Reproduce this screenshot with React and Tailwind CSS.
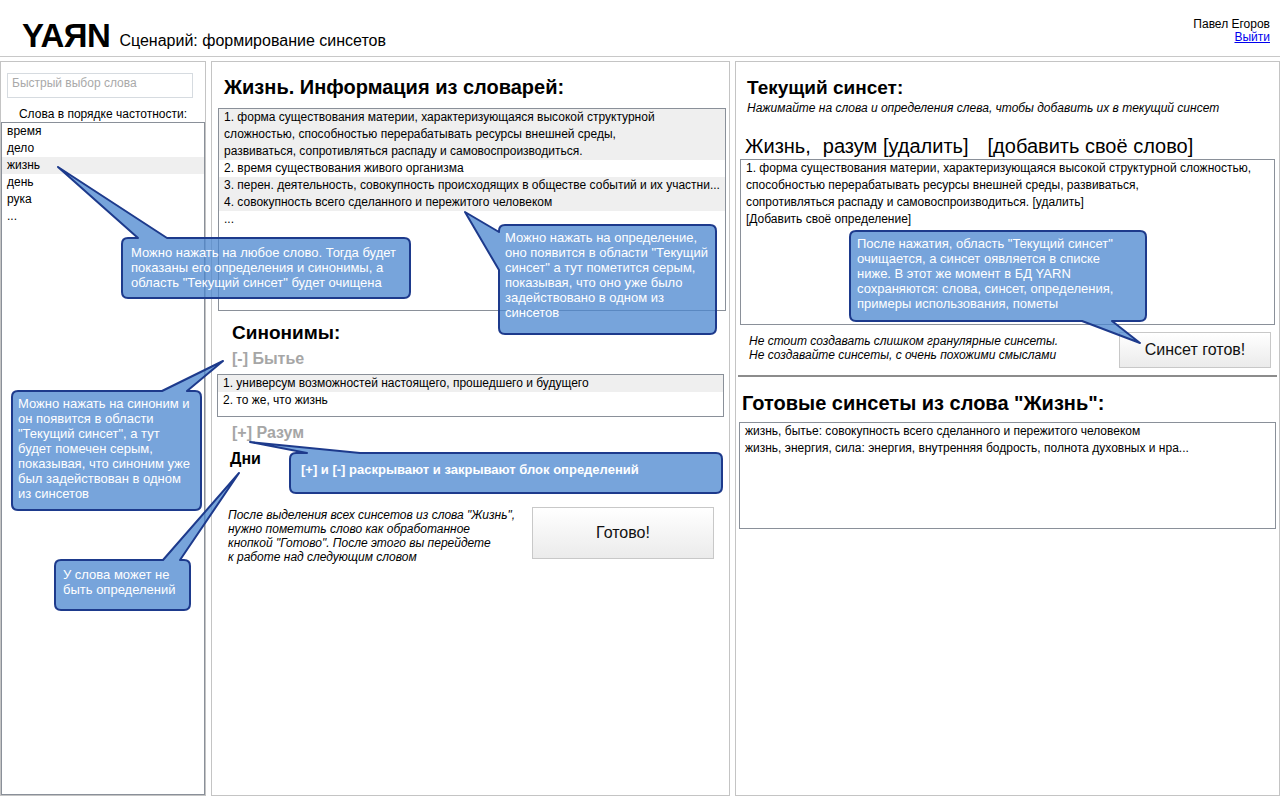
import React from 'react';

const words = ['время', 'дело', 'жизнь', 'день', 'рука', '...'];

const callouts = [
  {
    box: { x: 122, y: 238, w: 288, h: 60 }, side: 'top', a: 138, b: 167, tip: [58, 167],
    text: { x: 131, y: 245 },
    lines: ['Можно нажать на любое слово. Тогда будет', 'показаны его определения и синонимы, а', 'область "Текущий синсет" будет очищена'],
  },
  {
    box: { x: 499, y: 225, w: 217, h: 109 }, side: 'left', a: 232, b: 270, tip: [465, 212],
    text: { x: 505, y: 230 },
    lines: ['Можно нажать на определение,', 'оно появится в области "Текущий', 'синсет" а тут пометится серым,', 'показывая, что оно уже было', 'задействовано в одном из', 'синсетов'],
  },
  {
    box: { x: 12, y: 391, w: 189, h: 119 }, side: 'top', a: 162, b: 187, tip: [223, 361],
    text: { x: 18, y: 396 },
    lines: ['Можно нажать на синоним и', 'он появится в области', '"Текущий синсет", а тут', 'будет помечен серым,', 'показывая, что синоним уже', 'был задействован в одном', 'из синсетов'],
  },
  {
    box: { x: 55, y: 560, w: 135, h: 50 }, side: 'top', a: 163, b: 180, tip: [239, 473],
    text: { x: 63, y: 567 },
    lines: ['У слова может не', 'быть определений'],
  },
  {
    box: { x: 290, y: 453, w: 432, h: 40 }, side: 'top', a: 307, b: 360, tip: [250, 442],
    text: { x: 301, y: 462 }, bold: true,
    lines: ['[+] и [-] раскрывают и закрывают блок определений'],
  },
  {
    box: { x: 850, y: 231, w: 296, h: 90 }, side: 'bottom', a: 1082, b: 1112, tip: [1140, 343],
    text: { x: 857, y: 236 },
    lines: ['После нажатия, область "Текущий синсет"', 'очищается, а синсет оявляется в списке', 'ниже. В этот же момент в БД YARN', 'сохраняются: слова, синсет, определения,', 'примеры использования, пометы'],
  },
];

// rounded box with a pointer on one edge
function calloutPath({ box, side, a, b, tip }) {
  const { x, y, w, h } = box;
  const r = 6;
  const [tx, ty] = tip;
  const R = x + w;
  const B = y + h;
  let d = `M ${x + r} ${y} `;
  if (side === 'top') d += `L ${a} ${y} L ${tx} ${ty} L ${b} ${y} `;
  d += `L ${R - r} ${y} Q ${R} ${y} ${R} ${y + r} L ${R} ${B - r} Q ${R} ${B} ${R - r} ${B} `;
  if (side === 'bottom') d += `L ${b} ${B} L ${tx} ${ty} L ${a} ${B} `;
  d += `L ${x + r} ${B} Q ${x} ${B} ${x} ${B - r} `;
  if (side === 'left') d += `L ${x} ${b} L ${tx} ${ty} L ${x} ${a} `;
  d += `L ${x} ${y + r} Q ${x} ${y} ${x + r} ${y} Z`;
  return d;
}

const Row = ({ gray, children }) => (
  <div className={`px-[5px] leading-[17px] whitespace-nowrap overflow-hidden ${gray ? 'bg-[#efefef]' : ''}`}>{children}</div>
);

const Button = ({ className, children }) => (
  <button className={`border border-[#c8c8c8] bg-linear-to-b from-white to-[#ebebeb] text-[16px] text-[#111] ${className}`}>
    {children}
  </button>
);

export default function App() {
  return (
    <div className="relative w-[1280px] h-[800px] overflow-hidden bg-white text-black font-['Liberation_Sans',Arial,sans-serif]">
      {/* header */}
      <div className="h-[57px] border-b border-[#c8c8c8] flex justify-between">
        <div className="flex items-baseline pl-[22px] pt-[21px]">
          <span className="text-[33px] font-bold tracking-[-0.5px] leading-[30px]">YAЯN</span>
          <span className="ml-[9px] text-[16px] relative -top-[1px]">Сценарий: формирование синсетов</span>
        </div>
        <div className="pt-[18px] pr-[10px] text-right text-[12px] leading-[13px]">
          <div>Павел Егоров</div>
          <a href="#" className="text-[#0000ee] underline">Выйти</a>
        </div>
      </div>

      {/* columns */}
      <div className="mt-[4px] h-[735px] flex gap-[5px]">
        {/* words */}
        <div className="w-[206px] border border-[#c4c4c4] flex flex-col">
          <input
            className="ml-[6px] mt-[11px] w-[186px] h-[25px] border border-[#d6dbe0] px-[4px] pt-0 pb-[6px] text-[12px] outline-none placeholder:text-[#a9a9a9]"
            placeholder="Быстрый выбор слова"
          />
          <div className="mt-[8px] text-center text-[12px] leading-[16px]">Слова в порядке частотности:</div>
          <div className="flex-1 border border-[#8a9099] text-[12px]">
            {words.map((w) => (
              <div key={w} className={`pl-[5px] leading-[17px] ${w === 'жизнь' ? 'bg-[#efefef]' : ''}`}>{w}</div>
            ))}
          </div>
        </div>

        {/* dictionary info */}
        <div className="w-[519px] border border-[#c4c4c4] flex flex-col items-start">
          <h1 className="ml-[12px] mt-[13px] text-[20px] leading-[24px] font-bold">Жизнь. Информация из словарей:</h1>
          <div className="ml-[6px] mt-[9px] w-[508px] h-[203px] border border-[#8a9099] text-[12px]">
            <Row gray>
              1. форма существования материи, характеризующаяся высокой структурной<br />
              сложностью, способностью перерабатывать ресурсы внешней среды,<br />
              развиваться, сопротивляться распаду и самовоспроизводиться.
            </Row>
            <Row>2. время существования живого организма</Row>
            <Row gray>3. перен. деятельность, совокупность происходящих в обществе событий и их участни...</Row>
            <Row gray>4. совокупность всего сделанного и пережитого человеком</Row>
            <Row>...</Row>
          </div>

          <h2 className="ml-[20px] mt-[10px] text-[19px] leading-[23px] font-bold">Синонимы:</h2>
          <div className="ml-[20px] mt-[5px] text-[16px] leading-[19px] font-bold text-[#a6a6a6]">[-] Бытье</div>
          <div className="ml-[5px] mt-[6px] w-[507px] h-[43px] border border-[#8a9099] text-[12px]">
            <Row gray>1. универсум возможностей настоящего, прошедшего и будущего</Row>
            <Row>2. то же, что жизнь</Row>
          </div>
          <div className="ml-[20px] mt-[6px] text-[16px] leading-[19px] font-bold text-[#a6a6a6]">[+] Разум</div>
          <div className="ml-[18px] mt-[7px] text-[16px] leading-[19px] font-bold">Дни</div>

          <div className="mt-[39px] flex w-full">
            <p className="ml-[16px] w-[304px] pt-[1px] text-[12px] leading-[14px] italic">
              После выделения всех синсетов из слова "Жизнь",<br />
              нужно пометить слово как обработанное<br />
              кнопкой "Готово". После этого вы перейдете<br />
              к работе над следующим словом
            </p>
            <Button className="w-[182px] h-[52px]">Готово!</Button>
          </div>
        </div>

        {/* current synset */}
        <div className="w-[545px] border border-[#c4c4c4] flex flex-col items-start">
          <h1 className="ml-[11px] mt-[14px] text-[19px] leading-[23px] font-bold">Текущий синсет:</h1>
          <div className="ml-[11px] mt-[2px] text-[12px] leading-[14px] italic">
            Нажимайте на слова и определения слева, чтобы добавить их в текущий синсет
          </div>
          <div className="ml-[9px] mt-[19px] text-[20px] leading-[24px] whitespace-nowrap">
            <span>Жизнь,</span>
            <span className="ml-[12px]">разум [удалить]</span>
            <span className="ml-[19px]">[добавить своё слово]</span>
          </div>
          <div className="ml-[4px] mt-[1px] w-[535px] h-[166px] border border-[#8a9099] text-[12px]">
            <Row>1. форма существования материи, характеризующаяся высокой структурной сложностью,</Row>
            <Row>способностью перерабатывать ресурсы внешней среды, развиваться,</Row>
            <Row>сопротивляться распаду и самовоспроизводиться. [удалить]</Row>
            <Row>[Добавить своё определение]</Row>
          </div>
          <div className="mt-[7px] flex w-full">
            <p className="ml-[13px] pt-[2px] text-[12px] leading-[14px] italic">
              Не стоит создавать слишком гранулярные синсеты.<br />
              Не создавайте синсеты, с очень похожими смыслами
            </p>
            <Button className="ml-auto mr-[8px] w-[152px] h-[36px]">Синсет готов!</Button>
          </div>
          <div className="mt-[7px] ml-[2px] w-[539px] h-[2px] bg-[#8c8c8c]" />
          <h2 className="ml-[6px] mt-[14px] text-[20px] leading-[24px] font-bold">Готовые синсеты из слова "Жизнь":</h2>
          <div className="ml-[3px] mt-[7px] w-[537px] h-[107px] border border-[#8a9099] text-[12px]">
            <Row>жизнь, бытье: совокупность всего сделанного и пережитого человеком</Row>
            <Row>жизнь, энергия, сила: энергия, внутренняя бодрость, полнота духовных и нра...</Row>
          </div>
        </div>
      </div>

      {/* annotation callouts */}
      <svg className="absolute left-0 top-0 pointer-events-none" width="1280" height="800">
        {callouts.map((c, i) => (
          <path key={i} d={calloutPath(c)} fill="rgba(74,134,207,0.75)" stroke="#1d3a8c" strokeWidth="2" strokeLinejoin="round" />
        ))}
      </svg>
      {callouts.map((c, i) => (
        <div
          key={i}
          className={`absolute text-[13px] leading-[15px] text-white whitespace-nowrap ${c.bold ? 'font-bold' : ''}`}
          style={{ left: c.text.x, top: c.text.y }}
        >
          {c.lines.map((l) => (
            <div key={l}>{l}</div>
          ))}
        </div>
      ))}
    </div>
  );
}
